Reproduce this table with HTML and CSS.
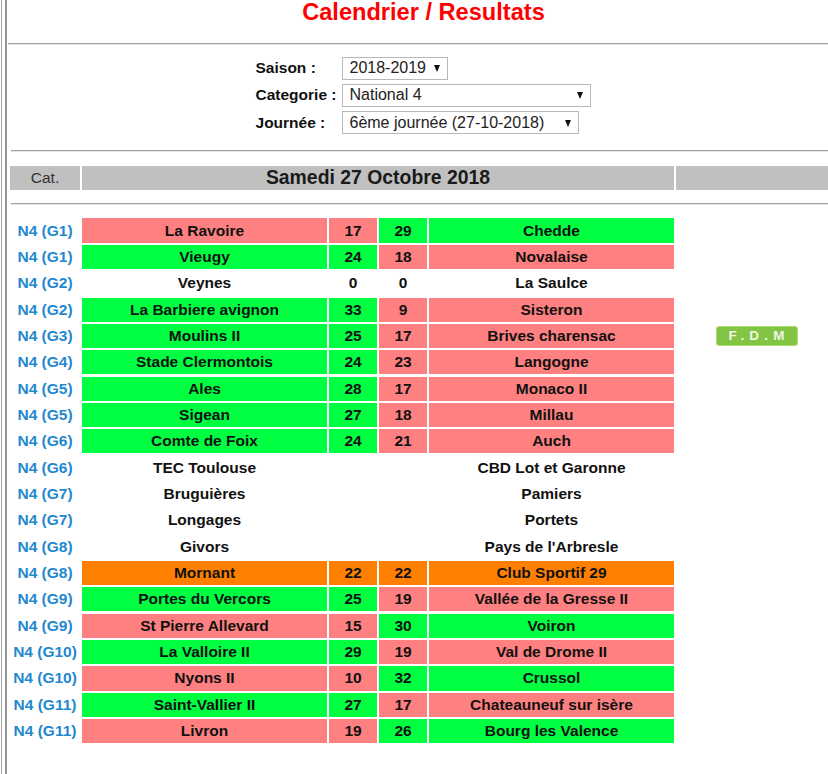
FILE: index.html
```html
<!DOCTYPE html>
<html lang="fr">
<head>
<meta charset="utf-8">
<title>Calendrier / Resultats</title>
<link rel="stylesheet" href="styles.css">
</head>
<body>
<div class="page">
  <h1 class="title">Calendrier / Resultats</h1>
  <hr class="rule rule-top">
  <form class="filters">
    <label class="flabel">Saison :</label>
    <div class="select sel-saison"><span>2018-2019</span><i class="arrow"></i></div>
    <label class="flabel">Categorie :</label>
    <div class="select sel-cat"><span>National 4</span><i class="arrow"></i></div>
    <label class="flabel">Journée :</label>
    <div class="select sel-day"><span>6ème journée (27-10-2018)</span><i class="arrow"></i></div>
  </form>
  <hr class="rule rule-mid rule-2">
  <table class="grid head">
    <colgroup><col class="c-cat"><col class="c-team"><col class="c-score"><col class="c-score"><col class="c-team"><col class="c-extra"></colgroup>
    <tr><th class="cat-h">Cat.</th><th colspan="4" class="date-h">Samedi 27 Octobre 2018</th><th class="blank-h"></th></tr>
  </table>
  <hr class="rule rule-mid rule-3">
  <table class="results">
    <tbody>
    <tr><td class="cat">N4 (G1)</td><td class="l">La Ravoire</td><td class="l">17</td><td class="w">29</td><td class="w">Chedde</td><td></td></tr>
    <tr><td class="cat">N4 (G1)</td><td class="w">Vieugy</td><td class="w">24</td><td class="l">18</td><td class="l">Novalaise</td><td></td></tr>
    <tr><td class="cat">N4 (G2)</td><td>Veynes</td><td>0</td><td>0</td><td>La Saulce</td><td></td></tr>
    <tr><td class="cat">N4 (G2)</td><td class="w">La Barbiere avignon</td><td class="w">33</td><td class="l">9</td><td class="l">Sisteron</td><td></td></tr>
    <tr><td class="cat">N4 (G3)</td><td class="w">Moulins II</td><td class="w">25</td><td class="l">17</td><td class="l">Brives charensac</td><td><span class="fdm">F.D.M</span></td></tr>
    <tr><td class="cat">N4 (G4)</td><td class="w">Stade Clermontois</td><td class="w">24</td><td class="l">23</td><td class="l">Langogne</td><td></td></tr>
    <tr><td class="cat">N4 (G5)</td><td class="w">Ales</td><td class="w">28</td><td class="l">17</td><td class="l">Monaco II</td><td></td></tr>
    <tr><td class="cat">N4 (G5)</td><td class="w">Sigean</td><td class="w">27</td><td class="l">18</td><td class="l">Millau</td><td></td></tr>
    <tr><td class="cat">N4 (G6)</td><td class="w">Comte de Foix</td><td class="w">24</td><td class="l">21</td><td class="l">Auch</td><td></td></tr>
    <tr><td class="cat">N4 (G6)</td><td>TEC Toulouse</td><td></td><td></td><td>CBD Lot et Garonne</td><td></td></tr>
    <tr><td class="cat">N4 (G7)</td><td>Bruguières</td><td></td><td></td><td>Pamiers</td><td></td></tr>
    <tr><td class="cat">N4 (G7)</td><td>Longages</td><td></td><td></td><td>Portets</td><td></td></tr>
    <tr><td class="cat">N4 (G8)</td><td>Givors</td><td></td><td></td><td>Pays de l'Arbresle</td><td></td></tr>
    <tr><td class="cat">N4 (G8)</td><td class="d">Mornant</td><td class="d">22</td><td class="d">22</td><td class="d">Club Sportif 29</td><td></td></tr>
    <tr><td class="cat">N4 (G9)</td><td class="w">Portes du Vercors</td><td class="w">25</td><td class="l">19</td><td class="l">Vallée de la Gresse II</td><td></td></tr>
    <tr><td class="cat">N4 (G9)</td><td class="l">St Pierre Allevard</td><td class="l">15</td><td class="w">30</td><td class="w">Voiron</td><td></td></tr>
    <tr><td class="cat">N4 (G10)</td><td class="w">La Valloire II</td><td class="w">29</td><td class="l">19</td><td class="l">Val de Drome II</td><td></td></tr>
    <tr><td class="cat">N4 (G10)</td><td class="l">Nyons II</td><td class="l">10</td><td class="w">32</td><td class="w">Crussol</td><td></td></tr>
    <tr><td class="cat">N4 (G11)</td><td class="w">Saint-Vallier II</td><td class="w">27</td><td class="l">17</td><td class="l">Chateauneuf sur isère</td><td></td></tr>
    <tr><td class="cat">N4 (G11)</td><td class="l">Livron</td><td class="l">19</td><td class="w">26</td><td class="w">Bourg les Valence</td><td></td></tr>
    </tbody>
  </table>
</div>
</body>
</html>
```

FILE: styles.css
```css
html {
  background: #fff;
}

body {
  margin: 0;
  min-height: 774px;
  overflow: hidden;
  font-family: "Liberation Sans", Arial, sans-serif;
  color: #111;
  background:
    linear-gradient(to right, #fff 0 1px, #a3a3a3 1px 2px, #fff 2px 5px, #959595 5px 7px, #fff 7px 8px) no-repeat;
  background-size: 8px 100%;
}

.page {
  width: 831px;
  margin-left: 8px;
}

.title {
  margin: 0;
  height: 27px;
  line-height: 25px;
  font-size: 23.6px;
  font-weight: bold;
  color: #ff0000;
  text-align: center;
}

.rule {
  display: block;
  height: 0;
  margin: 0;
  border: 0;
  border-top: 1px solid #a0a0a0;
  border-bottom: 1px solid #e4e4e4;
}

.rule-top {
  margin-top: 16px;
}

.rule-mid {
  margin-left: 3px;
}

.rule-2 {
  margin-top: 15.7px;
}

.rule-3 {
  margin-top: 11px;
}

.filters {
  display: grid;
  grid-template-columns: auto auto;
  justify-content: center;
  align-items: center;
  column-gap: 6px;
  row-gap: 4.3px;
  margin: 11.7px 0 0;
}

.flabel {
  font-size: 15.5px;
  font-weight: bold;
  color: #111;
}

.select {
  box-sizing: border-box;
  height: 23px;
  display: flex;
  align-items: center;
  justify-content: space-between;
  padding: 0 7px 0 6px;
  border: 1px solid #b9b9b9;
  background: #fff;
  font-size: 16px;
  color: #222;
}

.sel-saison { width: 106px; }
.sel-cat { width: 249px; }
.sel-day { width: 237px; }

.arrow {
  display: block;
  width: 0;
  height: 0;
  border-left: 3.5px solid transparent;
  border-right: 3.5px solid transparent;
  border-top: 7px solid #111;
  margin-top: 1px;
}

.grid {
  width: 831px;
  table-layout: fixed;
  border-collapse: separate;
  border-spacing: 2px;
}

.head {
  margin-top: 12px;
}

.c-cat { width: 70px; }
.c-team { width: 245px; }
.c-score { width: 48px; }
.c-extra { width: 161px; }

.head th {
  height: 24px;
  padding: 0;
  background: #c0c0c0;
}

.cat-h {
  font-size: 15.5px;
  font-weight: normal;
  color: #333;
}

.date-h {
  font-size: 19.4px;
  font-weight: bold;
  color: #1a1a1a;
}

.results {
  display: block;
  margin-top: 11.5px;
}

.results tbody {
  display: grid;
  grid-template-columns: 70px 245px 48px 48px 245px 161px;
  grid-auto-rows: 24.2px;
  column-gap: 2px;
  row-gap: 2.16px;
  padding: 2px;
}

.results tr {
  display: contents;
}

.results td {
  display: flex;
  align-items: center;
  justify-content: center;
  padding: 0;
  font-size: 15.5px;
  font-weight: bold;
  color: #111;
  white-space: nowrap;
}

.results td.cat {
  color: #1f88cf;
}

.results td.w { background: #00ff41; }
.results td.l { background: #ff8080; }
.results td.d { background: #ff8000; }

.fdm {
  display: block;
  box-sizing: border-box;
  width: 82px;
  height: 20px;
  line-height: 18px;
  text-align: center;
  border: 1px solid #b2dc6a;
  border-radius: 3px;
  background: #82c443;
  color: #eef8e2;
  font-size: 13.5px;
  font-weight: bold;
  letter-spacing: 5.2px;
  text-indent: 5.2px;
}
```
